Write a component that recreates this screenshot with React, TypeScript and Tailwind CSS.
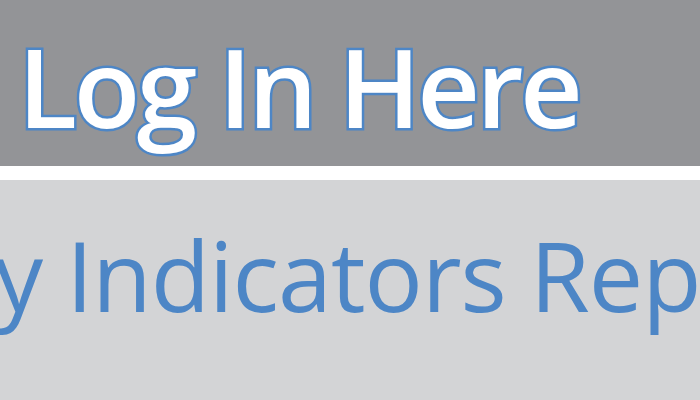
export default function App() {
  return (
    <div className="w-[700px] h-[400px] overflow-hidden bg-white font-['Open_Sans',sans-serif]">
      <header className="h-[166px] bg-[#939497] pl-[18px] pt-[31px]">
        <h1 className="text-[109px] leading-none font-semibold tracking-[-3.5px] text-white whitespace-nowrap [-webkit-text-stroke:5px_#4d86c6] [paint-order:stroke_fill]">
          Log In Here
        </h1>
      </header>
      <section className="mt-[14px] h-[220px] bg-[#d3d4d6] pt-[46px] overflow-hidden">
        <h2 className="text-[97px] leading-none tracking-[-1px] text-[#4d86c6] whitespace-nowrap ml-[-272px]">
          Quality Indicators Report
        </h2>
      </section>
    </div>
  );
}
